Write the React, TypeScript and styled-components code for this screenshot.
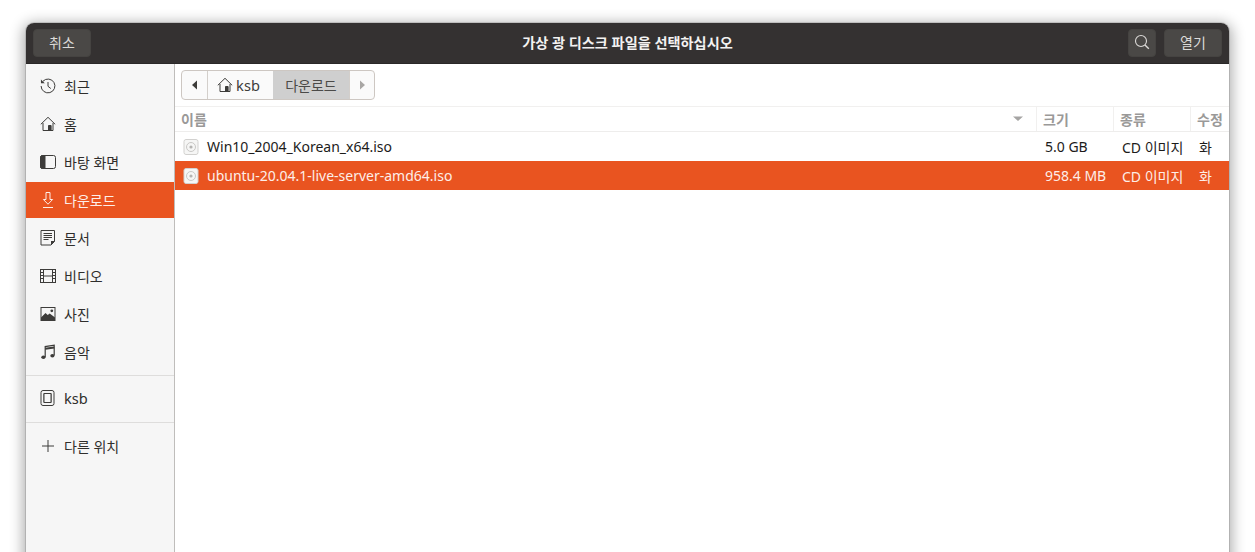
import React from "react";
import styled, { createGlobalStyle } from "styled-components";

const Global = createGlobalStyle`
  html, body { margin: 0; padding: 0; height: 552px; background: #fff; overflow: hidden; }
  body { font-family: "Noto Sans", "Noto Sans CJK KR", sans-serif; font-size: 14px; }
  #root { height: 552px; overflow: hidden; }
`;

const Page = styled.div`
  height: 552px;
  padding: 23px 26px 0 26px;
  box-sizing: border-box;
  overflow: hidden;
  background: #fff;
`;
const Win = styled.div`
  width: 1203px;
  height: 560px;
  display: flex;
  flex-direction: column;
  border-radius: 8px 8px 0 0;
  box-shadow: 0 0 0 1px rgba(0,0,0,0.12), 0 3px 14px 3px rgba(0,0,0,0.32);
  overflow: hidden;
  background: #fff;
`;
const TitleBar = styled.div`
  height: 41px;
  flex: none;
  background: #343131;
  border-bottom: 1px solid #2a2828;
  box-sizing: border-box;
  display: flex;
  align-items: center;
  padding: 0 7px;
  gap: 8px;
`;
const HeadBtn = styled.div<{ $w: number }>`
  width: ${p => p.$w}px;
  height: 28px;
  flex: none;
  box-sizing: border-box;
  border-radius: 4px;
  background: #4a4846;
  border: 1px solid #454341;
  color: #dcdad8;
  font-size: 14px;
  padding-bottom: 2px;
  display: flex;
  align-items: center;
  justify-content: center;
`;
const Title = styled.div`
  flex: 1;
  text-align: center;
  color: #f3f2f1;
  font-weight: 700;
  font-size: 14.2px;
  padding: 0 0 2px 36px;
`;
const Body = styled.div`
  flex: 1;
  display: flex;
  min-height: 0;
`;
const Sidebar = styled.div`
  width: 149px;
  flex: none;
  box-sizing: border-box;
  background: #f6f6f6;
  border-right: 1px solid #bfbdbb;
  padding-top: 4px;
`;
const Place = styled.div<{ $active?: boolean }>`
  height: 36px;
  margin-bottom: 2px;
  display: flex;
  align-items: center;
  padding-left: 14px;
  gap: 8px;
  font-size: 14px;
  color: ${p => (p.$active ? "#fdeee8" : "#2f2e2c")};
  background: ${p => (p.$active ? "#e95420" : "transparent")};
  svg { flex: none; display: block; }
`;
const Latin = styled.span`
  font-size: 14.6px;
`;
const Sep = styled.div<{ $top: number; $bottom: number }>`
  height: 1px;
  background: #dedddc;
  margin: ${p => p.$top}px 0 ${p => p.$bottom}px;
`;
const Main = styled.div`
  flex: 1;
  min-width: 0;
  display: flex;
  flex-direction: column;
  background: #fff;
`;
const PathWrap = styled.div`
  height: 43px;
  flex: none;
  box-sizing: border-box;
  padding: 6px 0 6px 6px;
  display: flex;
  border-bottom: 1px solid #f1f0ef;
`;
const Path = styled.div`
  height: 30px;
  display: flex;
  box-sizing: border-box;
  border: 1px solid #cdc7c2;
  border-radius: 4px;
  overflow: hidden;
  background: #fafafa;
`;
const PathSeg = styled.div<{ $w: number; $on?: boolean; $line?: boolean; $endPad?: number }>`
  width: ${p => p.$w}px;
  display: flex;
  align-items: center;
  justify-content: center;
  gap: 3px;
  font-size: 14px;
  box-sizing: border-box;
  padding-right: ${p => p.$endPad ?? 0}px;
  color: ${p => (p.$on ? "#4b4a48" : "#3d3c3a")};
  background: ${p => (p.$on ? "#cfcfcf" : "transparent")};
  border-right: ${p => (p.$line ? "1px solid #d3cfcb" : "none")};
`;
const HeaderRow = styled.div`
  height: 25px;
  flex: none;
  display: flex;
  align-items: center;
  box-sizing: border-box;
  border-bottom: 1px solid #eeedec;
  color: #9a9998;
  font-size: 14px;
  font-weight: 700;
`;
const Col = styled.div<{ $w?: number; $line?: boolean }>`
  ${p => (p.$w ? `width: ${p.$w}px; flex: none;` : "flex: 1; min-width: 0;")}
  height: 100%;
  box-sizing: border-box;
  display: flex;
  align-items: center;
  white-space: nowrap;
  overflow: hidden;
  padding-left: 6px;
  border-right: ${p => (p.$line ? "1px solid #f1f0ef" : "none")};
`;
const NameHead = styled(Col)`
  padding: 0 13px 0 6px;
  justify-content: space-between;
`;
const FileRow = styled.div<{ $sel?: boolean }>`
  height: 29px;
  flex: none;
  display: flex;
  align-items: center;
  font-size: 14px;
  color: ${p => (p.$sel ? "#fdeee8" : "#1c1b1a")};
  background: ${p => (p.$sel ? "#e95420" : "#fff")};
`;
const NameCell = styled.div`
  flex: 1;
  min-width: 0;
  display: flex;
  align-items: center;
  padding-left: 8px;
  gap: 8px;
  font-size: 14px;
`;
const Cell = styled.div<{ $w: number }>`
  width: ${p => p.$w}px;
  flex: none;
  padding-left: 8px;
  box-sizing: border-box;
  white-space: nowrap;
  overflow: hidden;
  font-size: 14px;
`;

const Disc = () => (
  <svg width="16" height="16" viewBox="0 0 16 16">
    <rect x="1" y="0.5" width="14" height="15" rx="2" fill="#f6f6f5" stroke="#d2d1cf" />
    <circle cx="8" cy="8" r="4.5" fill="none" stroke="#c9c8c6" />
    <circle cx="8" cy="8" r="1.6" fill="#b5b4b2" />
  </svg>
);
const I = { width: 16, height: 16, viewBox: "0 0 16 16", fill: "none", stroke: "#3d3c3a", strokeWidth: 1 };

const Recent = () => (
  <svg {...I}>
    <path d="M3 3.2A6.9 6.9 0 1 1 1.1 8" />
    <path d="M0.9 1.6 L1 5.3 L4.8 5.3 Z" fill="#3d3c3a" stroke="none" />
    <path d="M8 4v4.3l2.8 2.2" />
  </svg>
);
const Home = ({ c = "#3d3c3a" }: { c?: string }) => (
  <svg {...I} stroke={c}>
    <path d="M0.8 8.3 8 1.3l7.2 7" />
    <path d="M3 7v7.5h10V7" />
    <path d="M8.5 9.5h2.6v5H8.5z" fill={c} />
  </svg>
);
const Desktop = () => (
  <svg {...I}>
    <rect x="0.5" y="1.5" width="15" height="13" rx="2" />
    <path d="M0.5 3.5a2 2 0 0 1 2-2H5v13H2.5a2 2 0 0 1-2-2z" fill="#3d3c3a" />
  </svg>
);
const Down = () => (
  <svg {...I} stroke="#fdeee8">
    <path d="M6 0.5h4v7h2.6L8 12.2 3.4 7.5H6z" />
    <path d="M3 15.5h10" />
  </svg>
);
const Doc = () => (
  <svg {...I}>
    <path d="M1 0.5h13.5v11l-3.5 3.5H1z" />
    <path d="M3.5 3.5h8.5M3.5 5.5h8.5M3.5 7.5h8.5M3.5 9.5h5" />
    <path d="M15 11 H11 V15 Z" fill="#3d3c3a" stroke="none" />
  </svg>
);
const Film = () => (
  <svg {...I}>
    <rect x="0.5" y="1.5" width="15" height="13" />
    <path d="M3.5 1.5v13M12.5 1.5v13M3.5 8h9M0.5 4.5h3M0.5 7.5h3M0.5 10.5h3M12.5 4.5h3M12.5 7.5h3M12.5 10.5h3" />
  </svg>
);
const Photo = () => (
  <svg {...I}>
    <rect x="1" y="1.5" width="14" height="13" />
    <path d="M1 11.5 5.5 7l2.2 2 2-1.6 5.3 4V15H1z" fill="#3d3c3a" stroke="none" />
    <circle cx="11.8" cy="4.8" r="1.4" fill="#3d3c3a" stroke="none" />
  </svg>
);
const Music = () => (
  <svg {...I} strokeWidth={1.2}>
    <path d="M5.2 13V2.6L14.2 1.2V11.5" />
    <path d="M5.2 4.8 14.2 3.4" strokeWidth={2} />
    <ellipse cx="3.4" cy="13.2" rx="2.1" ry="1.7" fill="#3d3c3a" stroke="none" />
    <ellipse cx="12.4" cy="11.8" rx="2.1" ry="1.7" fill="#3d3c3a" stroke="none" />
  </svg>
);
const Drive = () => (
  <svg {...I}>
    <rect x="1" y="0.5" width="13" height="15" rx="2" />
    <rect x="4" y="3.5" width="7" height="9" />
    <path d="M4 5H3M4 7H3M4 9H3M4 11H3M11 5h1M11 7h1M11 9h1M11 11h1" />
  </svg>
);
const Plus = () => (
  <svg {...I}>
    <path d="M2 8h12M8 2v12" />
  </svg>
);
const Search = () => (
  <svg width="16" height="16" viewBox="0 0 16 16" fill="none" stroke="#dcdad8" strokeWidth="1.1">
    <circle cx="7" cy="7" r="5.5" />
    <path d="M11 11l3.8 3.8" strokeWidth="1.4" />
  </svg>
);
const Tri = ({ d, c }: { d: "l" | "r" | "down"; c: string }) => (
  <svg width="10" height="10" viewBox="0 0 10 10">
    <path d={d === "l" ? "M7 0.5v9L2 5z" : d === "r" ? "M3 0.5v9L8 5z" : "M0 2.5h10L5 7z"} fill={c} />
  </svg>
);

const places: [string, React.ReactNode][] = [
  ["최근", <Recent />],
  ["홈", <Home />],
  ["바탕 화면", <Desktop />],
  ["다운로드", <Down />],
  ["문서", <Doc />],
  ["비디오", <Film />],
  ["사진", <Photo />],
  ["음악", <Music />],
];

export default function App() {
  return (
    <Page>
      <Global />
      <Win>
        <TitleBar>
          <HeadBtn $w={58}>취소</HeadBtn>
          <Title>가상 광 디스크 파일을 선택하십시오</Title>
          <HeadBtn $w={28}><Search /></HeadBtn>
          <HeadBtn $w={58}>열기</HeadBtn>
        </TitleBar>
        <Body>
          <Sidebar>
            {places.map(([t, ic]) => (
              <Place key={t} $active={t === "다운로드"}>{ic}{t}</Place>
            ))}
            <Sep $top={5} $bottom={4} />
            <Place><Drive /><Latin>ksb</Latin></Place>
            <Sep $top={6} $bottom={5} />
            <Place><Plus />다른 위치</Place>
          </Sidebar>
          <Main>
            <PathWrap>
              <Path>
                <PathSeg $w={26} $line><Tri d="l" c="#3d3c3a" /></PathSeg>
                <PathSeg $w={65} $endPad={4}><Home /><Latin>ksb</Latin></PathSeg>
                <PathSeg $w={77} $on $line>다운로드</PathSeg>
                <PathSeg $w={24}><Tri d="r" c="#a8a6a4" /></PathSeg>
              </Path>
            </PathWrap>
            <HeaderRow>
              <NameHead $line>이름<Tri d="down" c="#a5a4a3" /></NameHead>
              <Col $w={77} $line>크기</Col>
              <Col $w={77} $line>종류</Col>
              <Col $w={38}>수정</Col>
            </HeaderRow>
            <FileRow>
              <NameCell><Disc />Win10_2004_Korean_x64.iso</NameCell>
              <Cell $w={77}>5.0 GB</Cell>
              <Cell $w={77}>CD 이미지</Cell>
              <Cell $w={38}>화</Cell>
            </FileRow>
            <FileRow $sel>
              <NameCell><Disc />ubuntu-20.04.1-live-server-amd64.iso</NameCell>
              <Cell $w={77}>958.4 MB</Cell>
              <Cell $w={77}>CD 이미지</Cell>
              <Cell $w={38}>화</Cell>
            </FileRow>
          </Main>
        </Body>
      </Win>
    </Page>
  );
}
